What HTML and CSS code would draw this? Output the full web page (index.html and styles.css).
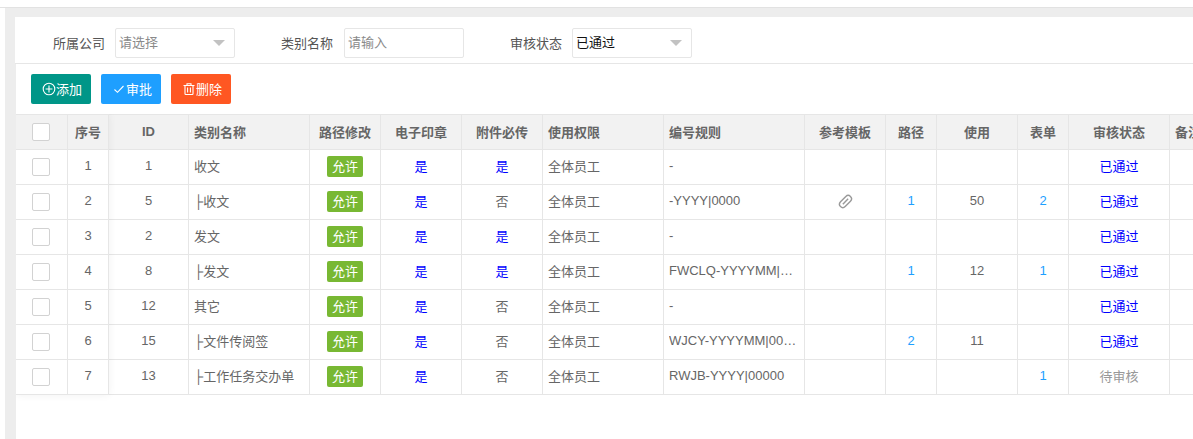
FILE: index.html
```html
<!DOCTYPE html>
<html lang="zh-CN">
<head>
    <meta charset="UTF-8">
    <link rel="stylesheet" href="styles.css">
</head>
<body>
    <div class="top-bar"></div>
    <div class="page">
        <div class="content">
            <form class="search-form">
                <label class="form-label label-company">所属公司</label>
                <div class="select placeholder">请选择<span class="caret"></span></div>
                <label class="form-label label-name">类别名称</label>
                <div class="input placeholder">请输入</div>
                <label class="form-label label-status">审核状态</label>
                <div class="select selected">已通过<span class="caret"></span></div>
            </form>
            <div class="panel">
                <div class="toolbar">
                    <button class="btn btn-green" type="button">
                        <svg class="btn-icon" viewBox="0 0 14 14"><circle cx="7" cy="7" r="5.8"/><path d="M7 3.6v6.8M3.6 7h6.8"/></svg>添加
                    </button>
                    <button class="btn btn-blue" type="button">
                        <svg class="btn-icon" viewBox="0 0 14 14"><path d="M2.500 7.500l3 2.800L11.500 4"/></svg>审批
                    </button>
                    <button class="btn btn-orange" type="button">
                        <svg class="btn-icon" viewBox="0 0 14 14"><path d="M1.500 3.500h11M5 3.500V1.800h4v1.700M3 3.500v8.300q0 .7.7.7h6.600q.7 0 .7-.7V3.500M5.600 5.500v5M8.400 5.500v5"/></svg>删除
                    </button>
                </div>
                <div class="table-wrap">
                    <div class="fixed-shadow"></div>
                    <table class="data-table">
                        <colgroup>
                            <col class="w52"><col class="w41"><col class="w80"><col class="w121"><col class="w71"><col class="w81"><col class="w81"><col class="w121"><col class="w141"><col class="w81"><col class="w51"><col class="w81"><col class="w51"><col class="w101"><col class="w100">
                        </colgroup>
                        <thead>
                            <tr>
                                <th class="check-cell"><span class="check"></span></th>
                                <th>序号</th>
                                <th>ID</th>
                                <th class="left">类别名称</th>
                                <th>路径修改</th>
                                <th>电子印章</th>
                                <th>附件必传</th>
                                <th class="left">使用权限</th>
                                <th class="left">编号规则</th>
                                <th>参考模板</th>
                                <th>路径</th>
                                <th>使用</th>
                                <th>表单</th>
                                <th>审核状态</th>
                                <th class="left">备注</th>
                            </tr>
                        </thead>
                        <tbody>
                            <tr>
                                <td class="check-cell"><span class="check"></span></td><td>1</td><td>1</td>
                                <td class="left">收文</td>
                                <td><span class="badge">允许</span></td>
                                <td class="yes">是</td><td class="yes">是</td>
                                <td class="left">全体员工</td><td class="left">-</td>
                                <td></td><td></td><td></td><td></td>
                                <td class="yes">已通过</td><td></td>
                            </tr>
                            <tr>
                                <td class="check-cell"><span class="check"></span></td><td>2</td><td>5</td>
                                <td class="left"><span class="tree">├</span>收文</td>
                                <td><span class="badge">允许</span></td>
                                <td class="yes">是</td><td>否</td>
                                <td class="left">全体员工</td><td class="left">-YYYY|0000</td>
                                <td><svg class="clip" viewBox="0 0 16 16"><g transform="rotate(45 8 8)"><rect x="4.500" y="0.500" width="7" height="15" rx="3.500"/><path d="M8 4v8"/></g></svg></td>
                                <td class="num">1</td><td>50</td><td class="num">2</td>
                                <td class="yes">已通过</td><td></td>
                            </tr>
                            <tr>
                                <td class="check-cell"><span class="check"></span></td><td>3</td><td>2</td>
                                <td class="left">发文</td>
                                <td><span class="badge">允许</span></td>
                                <td class="yes">是</td><td class="yes">是</td>
                                <td class="left">全体员工</td><td class="left">-</td>
                                <td></td><td></td><td></td><td></td>
                                <td class="yes">已通过</td><td></td>
                            </tr>
                            <tr>
                                <td class="check-cell"><span class="check"></span></td><td>4</td><td>8</td>
                                <td class="left"><span class="tree">├</span>发文</td>
                                <td><span class="badge">允许</span></td>
                                <td class="yes">是</td><td class="yes">是</td>
                                <td class="left">全体员工</td><td class="left"><div class="ellipsis">FWCLQ-YYYYMM|0000</div></td>
                                <td></td><td class="num">1</td><td>12</td><td class="num">1</td>
                                <td class="yes">已通过</td><td></td>
                            </tr>
                            <tr>
                                <td class="check-cell"><span class="check"></span></td><td>5</td><td>12</td>
                                <td class="left">其它</td>
                                <td><span class="badge">允许</span></td>
                                <td class="yes">是</td><td>否</td>
                                <td class="left">全体员工</td><td class="left">-</td>
                                <td></td><td></td><td></td><td></td>
                                <td class="yes">已通过</td><td></td>
                            </tr>
                            <tr>
                                <td class="check-cell"><span class="check"></span></td><td>6</td><td>15</td>
                                <td class="left"><span class="tree">├</span>文件传阅签</td>
                                <td><span class="badge">允许</span></td>
                                <td class="yes">是</td><td>否</td>
                                <td class="left">全体员工</td><td class="left"><div class="ellipsis">WJCY-YYYYMM|00000</div></td>
                                <td></td><td class="num">2</td><td>11</td><td></td>
                                <td class="yes">已通过</td><td></td>
                            </tr>
                            <tr>
                                <td class="check-cell"><span class="check"></span></td><td>7</td><td>13</td>
                                <td class="left"><span class="tree">├</span>工作任务交办单</td>
                                <td><span class="badge">允许</span></td>
                                <td class="yes">是</td><td>否</td>
                                <td class="left">全体员工</td><td class="left">RWJB-YYYY|00000</td>
                                <td></td><td></td><td></td><td class="num">1</td>
                                <td class="pending">待审核</td><td></td>
                            </tr>
                        </tbody>
                    </table>
                </div>
            </div>
        </div>
    </div>
</body>
</html>
```

FILE: styles.css
```css
* {
    box-sizing: border-box;
}

html, body {
    height: 100%;
}

body {
    margin: 0;
    overflow: hidden;
    background-color: #fff;
    color: #666;
    font-family: "Liberation Sans", "Noto Sans CJK SC", sans-serif;
    font-size: 13px;
}

.top-bar {
    height: 8px;
    background-color: #fff;
    border-bottom: 1px solid #e2e2e2;
}

/* Page frame */
.page {
    height: 431px;
    margin-left: 5px;
    padding: 9px 0 0 10px;
    background-color: #ededed;
}

.content {
    height: 100%;
}

/* Search form */
.search-form {
    display: flex;
    align-items: center;
    height: 47px;
    padding-top: 5px;
    background-color: #fff;
    border-bottom: 1px solid #e6e6e6;
}

.form-label {
    width: 52px;
    color: #555;
    white-space: nowrap;
}

.label-company {
    margin-left: 38px;
}

.label-name {
    margin-left: 46px;
}

.label-status {
    margin-left: 46px;
}

.select,
.input {
    position: relative;
    width: 120px;
    height: 30px;
    margin-left: 10px;
    padding-left: 3px;
    border: 1px solid #e6e6e6;
    border-radius: 2px;
    line-height: 28px;
}

.input {
    margin-left: 11px;
}

.placeholder {
    color: #8a8a8a;
}

.selected {
    color: #111;
}

.caret {
    position: absolute;
    top: 11px;
    right: 9px;
    border-style: solid;
    border-width: 6px 6px 0;
    border-color: #c2c2c2 transparent transparent;
}

/* Toolbar */
.panel {
    height: 375px;
    margin-left: 1px;
    background-color: #fff;
}

.toolbar {
    display: flex;
    gap: 10px;
    height: 50px;
    padding: 10px 0 0 15px;
}

.btn {
    display: flex;
    align-items: center;
    justify-content: center;
    width: 60px;
    height: 30px;
    padding: 0 0 2px 2px;
    border: none;
    border-radius: 2px;
    color: #fff;
    font-family: inherit;
    font-size: 13px;
}

.btn-green {
    background-color: #009688;
}

.btn-blue {
    background-color: #1e9fff;
}

.btn-orange {
    background-color: #ff5722;
}

.btn-icon {
    width: 14px;
    height: 14px;
    margin-top: 2px;
    fill: none;
    stroke: #fff;
    stroke-width: 1.1;
}

/* Table */
.table-wrap {
    position: relative;
    overflow: hidden;
    height: 325px;
}

.fixed-shadow {
    position: absolute;
    top: 0;
    left: 0;
    width: 93px;
    height: 281px;
    box-shadow: 0 0 8px rgba(0, 0, 0, 0.06);
    pointer-events: none;
}

.data-table {
    width: 1254px;
    table-layout: fixed;
    border-collapse: separate;
    border-spacing: 0;
}

.w52 { width: 52px; }
.w41 { width: 41px; }
.w80 { width: 80px; }
.w121 { width: 121px; }
.w71 { width: 71px; }
.w81 { width: 81px; }
.w141 { width: 141px; }
.w51 { width: 51px; }
.w101 { width: 101px; }
.w100 { width: 100px; }

.data-table th,
.data-table td {
    height: 35px;
    padding: 0 5px 4px;
    border-right: 1px solid #e6e6e6;
    border-bottom: 1px solid #e6e6e6;
    text-align: center;
    white-space: nowrap;
    overflow: hidden;
}

.data-table th {
    height: 36px;
    padding-bottom: 2px;
    background-color: #f2f2f2;
    border-top: 1px solid #e6e6e6;
    font-weight: bold;
}

.data-table .left {
    text-align: left;
}

.data-table .check-cell {
    padding-right: 7px;
}

.ellipsis {
    overflow: hidden;
    text-overflow: ellipsis;
}

.check {
    display: block;
    width: 18px;
    height: 18px;
    margin: 4px auto 0;
    background-color: #fff;
    border: 1px solid #d2d2d2;
    border-radius: 2px;
}

th .check {
    margin-top: 2px;
}

.badge {
    display: inline-block;
    width: 36px;
    height: 21px;
    margin-top: 2px;
    border-radius: 2px;
    background-color: #78b833;
    color: #fff;
    line-height: 21px;
    vertical-align: middle;
}

.data-table .yes {
    color: #00f;
}

.data-table .pending {
    color: #999;
}

.data-table .num {
    color: #1e9fff;
}

.clip {
    display: block;
    width: 15px;
    height: 15px;
    margin: 3px auto 0;
    fill: none;
    stroke: #999;
    stroke-width: 1.5;
}
```
